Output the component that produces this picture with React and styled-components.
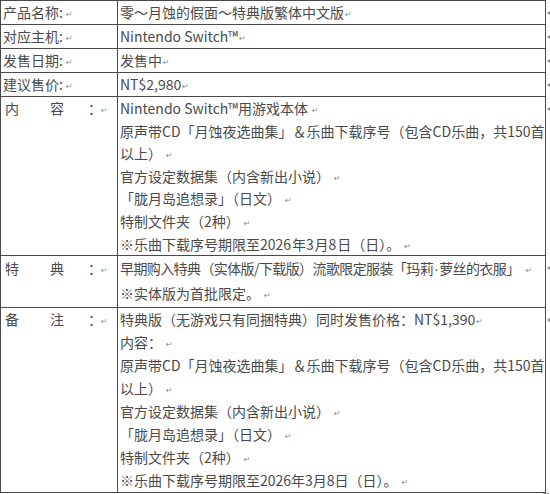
import React from 'react';
import styled, { createGlobalStyle } from 'styled-components';

const GlobalStyle = createGlobalStyle`
  html, body {
    margin: 0;
    padding: 0;
    background: #ffffff;
  }
  body {
    font-family: "Noto Sans CJK SC", "Noto Sans", sans-serif;
    color: #4a4a4a;
  }
`;

const Table = styled.div`
  width: 550px;
  font-size: 14px;
`;

const Row = styled.div`
  display: grid;
  grid-template-columns: 117px 429px 4px;
`;

const LabelCell = styled.div`
  border-top: 1px solid #4a4a4a;
  border-left: 1px solid #4a4a4a;
  border-bottom: ${p => (p.$last ? '1px solid #4a4a4a' : 'none')};
  padding: 0 2px 0 2px;
  line-height: ${p => p.$lh || 23}px;
`;

const ValueCell = styled.div`
  border-top: 1px solid #4a4a4a;
  border-left: 1px solid #4a4a4a;
  border-right: 1px solid #4a4a4a;
  border-bottom: ${p => (p.$last ? '1px solid #4a4a4a' : 'none')};
  padding: 0 0 ${p => p.$pb || 0}px 2px;
  line-height: ${p => p.$lh || 23}px;
  overflow: hidden;
`;

const MarkerCell = styled.div`
  display: flex;
  justify-content: flex-end;
  padding-top: ${p => p.$top || 11}px;
`;

const RowMark = styled.span`
  width: 0;
  height: 0;
  border-top: 2px solid transparent;
  border-bottom: 2px solid transparent;
  border-right: 3px solid #8a8a8a;
`;

const Line = styled.div`
  white-space: nowrap;
  letter-spacing: ${p => (p.$tight ? '-0.6px' : 'normal')};
`;

const Para = styled.span`
  display: inline-block;
  font-family: "DejaVu Sans", sans-serif;
  font-size: 8px;
  line-height: 0;
  letter-spacing: normal;
  color: #8a8a8a;
  margin-left: ${p => p.$gap || 1}px;
  vertical-align: 1px;
`;

const Dot = styled.span`
  font-family: "Liberation Sans", sans-serif;
  margin: 0 1px;
`;

const Spread = styled.div`
  display: grid;
  grid-template-columns: 45px 38px auto;
  padding-left: 2px;
  white-space: nowrap;
`;

const ResizeBox = styled.div`
  display: flex;
  justify-content: flex-end;
  padding-right: 1px;
`;

const Handle = styled.span`
  width: 4px;
  height: 2px;
  border: 1px solid #9a9a9a;
  border-bottom: none;
`;

const P = ({ gap }) => <Para $gap={gap}>↵</Para>;

const SpreadLabel = ({ a, b }) => (
  <Spread>
    <span>{a}</span>
    <span>{b}</span>
    <span>：<P gap={-1} /></span>
  </Spread>
);

const simpleRows = [
  { label: '产品名称', value: '零～月蚀的假面～特典版繁体中文版' },
  { label: '对应主机', value: 'Nintendo Switch™' },
  { label: '发售日期', value: '发售中' },
  { label: '建议售价', value: 'NT$2,980' },
];

const contentLines = [
  ['Nintendo Switch™用游戏本体', true],
  ['原声带CD「月蚀夜选曲集」＆乐曲下载序号（包含CD乐曲，共150首', false],
  ['以上）', true],
  ['官方设定数据集（内含新出小说）', true],
  ['「胧月岛追想录」（日文）', true],
  ['特制文件夹（2种）', true],
];

export default function App() {
  return (
    <>
      <GlobalStyle />
      <Table>
        {simpleRows.map(r => (
          <Row key={r.label}>
            <LabelCell>
              {r.label}:<P gap={3} />
            </LabelCell>
            <ValueCell>
              {r.value}
              <P />
            </ValueCell>
            <MarkerCell>
              <RowMark />
            </MarkerCell>
          </Row>
        ))}

        <Row>
          <LabelCell $lh={22.6}>
            <SpreadLabel a="内" b="容" />
          </LabelCell>
          <ValueCell $lh={22.6}>
            {contentLines.map(([t, mark]) => (
              <Line key={t}>
                {t}
                {mark && <P gap={4} />}
              </Line>
            ))}
            <Line>
              ※乐曲下载序号期限至2026&#8202;年3&#8202;月8&#8202;日（日）。
              <P gap={4} />
            </Line>
          </ValueCell>
          <MarkerCell>
            <RowMark />
          </MarkerCell>
        </Row>

        <Row>
          <LabelCell $lh={24}>
            <SpreadLabel a="特" b="典" />
          </LabelCell>
          <ValueCell $lh={24} $pb={2}>
            <Line $tight>
              早期购入特典（实体版/下载版）流歌限定服装「玛莉<Dot>·</Dot>萝丝的衣服」
              <P gap={6} />
            </Line>
            <Line>
              ※实体版为首批限定。
              <P gap={4} />
            </Line>
          </ValueCell>
          <MarkerCell>
            <RowMark />
          </MarkerCell>
        </Row>

        <Row>
          <LabelCell $last>
            <SpreadLabel a="备" b="注" />
          </LabelCell>
          <ValueCell $last>
            <Line>
              特典版（无游戏只有同捆特典）同时发售价格：NT$1,390
              <P />
            </Line>
            <Line>
              内容：
              <P gap={4} />
            </Line>
            {contentLines.slice(1).map(([t, mark]) => (
              <Line key={t}>
                {t}
                {mark && <P gap={4} />}
              </Line>
            ))}
            <Line>
              ※乐曲下载序号期限至2026年3月8日（日）。
              <P gap={4} />
            </Line>
          </ValueCell>
          <MarkerCell>
            <RowMark />
          </MarkerCell>
        </Row>
        <ResizeBox>
          <Handle />
        </ResizeBox>
      </Table>
    </>
  );
}
